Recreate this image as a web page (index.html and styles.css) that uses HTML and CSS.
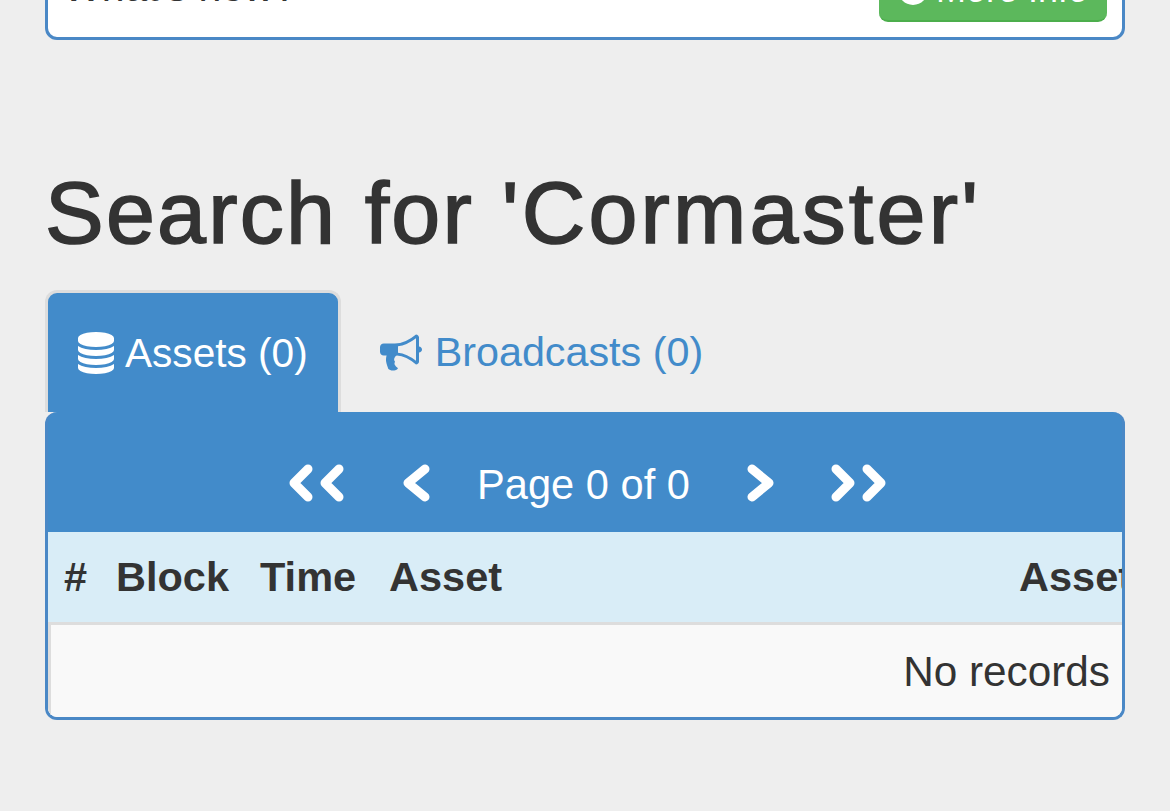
FILE: index.html
```html
<!DOCTYPE html>
<html lang="en">
<head>
<meta charset="utf-8">
<title>Search for 'Cormaster'</title>
<link rel="stylesheet" href="styles.css">
</head>
<body>
<div class="page">
  <section class="news">
    <span class="news-text">What's new?</span>
    <a class="btn-info"><svg class="btn-icon" viewBox="0 0 30 30"><circle cx="15" cy="15" r="15" fill="#fff"/></svg>More Info</a>
  </section>
  <h1 class="title">Search for <span class="term">'Cormaster'</span></h1>
  <ul class="tabs">
    <li class="tab active">
      <svg class="tab-icon db" viewBox="0 0 1536 1536"><path transform="translate(-128 -128)" fill="currentColor" d="M896 768q237 0 443-43t325-127v170q0 69-103 128t-280 93.5-385 34.5-385-34.5-280-93.5-103-128v-170q119 84 325 127t443 43zm0 768q237 0 443-43t325-127v170q0 69-103 128t-280 93.5-385 34.5-385-34.5-280-93.5-103-128v-170q119 84 325 127t443 43zm0-384q237 0 443-43t325-127v170q0 69-103 128t-280 93.5-385 34.5-385-34.5-280-93.5-103-128v-170q119 84 325 127t443 43zm0-1152q208 0 385 34.5t280 93.5 103 128v128q0 69-103 128t-280 93.5-385 34.5-385-34.5-280-93.5-103-128v-128q0-69 103-128t280-93.5 385-34.5z"/></svg>
      <span class="tab-label">Assets (0)</span>
    </li>
    <li class="tab">
      <svg class="tab-icon horn" viewBox="0 128 1792 1536"><path fill="currentColor" d="M1664 640q53 0 90.5 37.5t37.5 90.5-37.5 90.5-90.5 37.5v384q0 52-38 90t-90 38q-417-347-812-380-58 19-91 66t-31 100.5 40 92.5q-20 33-23 65.5t6 58 33.5 55 48 50 61.5 50.5q-29 58-111.5 83t-168.5 11.5-132-55.5q-7-23-29.5-87.5t-32-94.5-23-89-15-101 3.5-98.5 22-110.5h-122q-66 0-113-47t-47-113v-192q0-66 47-113t113-47h480q435 0 896-384 52 0 90 38t38 90v384zm-128 604v-954q-394 302-768 343v270q377 42 768 341z"/></svg>
      <span class="tab-label">Broadcasts (0)</span>
    </li>
  </ul>
  <section class="panel">
    <div class="pager">
      <svg class="chev dbl" viewBox="0 0 56 40"><path d="M19 5 5 19l14 14M50 5 36 19l14 14"/></svg>
      <svg class="chev sgl" viewBox="0 0 27 40"><path d="M22 5 5 19l17 14"/></svg>
      <span class="page-label">Page 0 of 0</span>
      <svg class="chev sgl chev-next" viewBox="0 0 27 40"><path d="M5 5l17 14L5 33"/></svg>
      <svg class="chev dbl" viewBox="0 0 56 40"><path d="M6 5l14 14L6 33M37 5l14 14-14 14"/></svg>
    </div>
    <div class="table-wrap">
      <table class="records">
        <thead>
          <tr>
            <th class="c-num">#</th>
            <th class="c-block">Block</th>
            <th class="c-time">Time</th>
            <th class="c-asset">Asset</th>
            <th class="c-long">Asset Longname</th>
          </tr>
        </thead>
      </table>
      <div class="empty">No records</div>
    </div>
  </section>
</div>
</body>
</html>
```
FILE: styles.css
```css
* { box-sizing: border-box; }
html, body { margin: 0; height: 811px; overflow: hidden; }
body {
  background: #eeeeee;
  color: #333333;
  font-family: "Liberation Sans", Arial, sans-serif;
}
.page { padding: 0 45px; }

.news {
  height: 60px;
  margin-top: -20px;
  padding: 0 15px 15px 15px;
  display: flex;
  justify-content: space-between;
  align-items: flex-end;
  background: #fff;
  border: 3px solid #4a88c6;
  border-radius: 12px;
}
.news-text { font-size: 41px; line-height: 40px; margin-bottom: 15px; }
.btn-info {
  width: 228px;
  height: 56px;
  padding-bottom: 6px;
  display: flex;
  align-items: center;
  justify-content: center;
  gap: 8px;
  color: #fff;
  font-size: 36px;
  background: #5cb85c;
  border-bottom: 2px solid #4cae4c;
  border-radius: 9px;
}
.btn-icon { width: 30px; height: 30px; }

.title {
  margin: 127px 0 0;
  font-size: 88px;
  line-height: 91px;
  font-weight: 400;
  letter-spacing: 2.2px;
  word-spacing: 1px;
  -webkit-text-stroke: 1.6px #333333;
}
.term { letter-spacing: 3.2px; }

.tabs {
  list-style: none;
  margin: 32px 0 0;
  padding: 0;
  display: flex;
  height: 122px;
}
.tab {
  height: 122px;
  padding: 2px 30px 0 34px;
  display: flex;
  align-items: center;
  gap: 13px;
  font-size: 41.3px;
  color: #428bca;
}
.tab.active {
  margin-right: 5px;
  padding: 1px 30px 0;
  gap: 11px;
  font-size: 40.6px;
  color: #fff;
  background: #428bca;
  border: 3px solid #dddddd;
  border-bottom: 0;
  border-radius: 12px 12px 0 0;
}
.tab-icon { display: block; }
.db { width: 36px; height: 42px; }
.horn { width: 42px; height: 37px; }

.panel {
  height: 308px;
  background: #428bca;
  border: 3px solid #4a88c6;
  border-top: 0;
  border-radius: 12px;
  overflow: hidden;
}
.pager {
  height: 120px;
  padding: 24px 0 0 5px;
  display: flex;
  align-items: center;
  justify-content: center;
  gap: 58px;
  color: #fff;
}
.chev { display: block; height: 40px; fill: none; stroke: #fff; stroke-width: 9; stroke-linecap: round; stroke-linejoin: round; }
.chev.dbl { width: 56px; }
.chev.sgl { width: 27px; }
.chev-next { margin-right: -2px; }
.page-label { font-size: 41.6px; margin: 2px -1px 0 -11px; }

.table-wrap { background: #fff; height: 185px; overflow: hidden; }
.records { border-collapse: collapse; table-layout: fixed; width: 1200px; }
.records th {
  height: 91px;
  padding: 0 15px;
  font-size: 41.5px;
  font-weight: 700;
  text-align: left;
  background: #d9edf7;
  border-bottom: 3px solid #dddddd;
  white-space: nowrap;
  overflow: hidden;
}
.c-num { width: 53px; }
.c-block { width: 144px; }
.c-time { width: 129px; }
.c-asset { width: 630px; }
.c-long { width: 244px; }
.records th.c-num { padding-left: 16px; }
.empty {
  height: 94px;
  padding-right: 12px;
  display: flex;
  align-items: center;
  justify-content: flex-end;
  font-size: 42.3px;
  background: #f9f9f9;
  border-left: 3px solid #dddddd;
}
```
